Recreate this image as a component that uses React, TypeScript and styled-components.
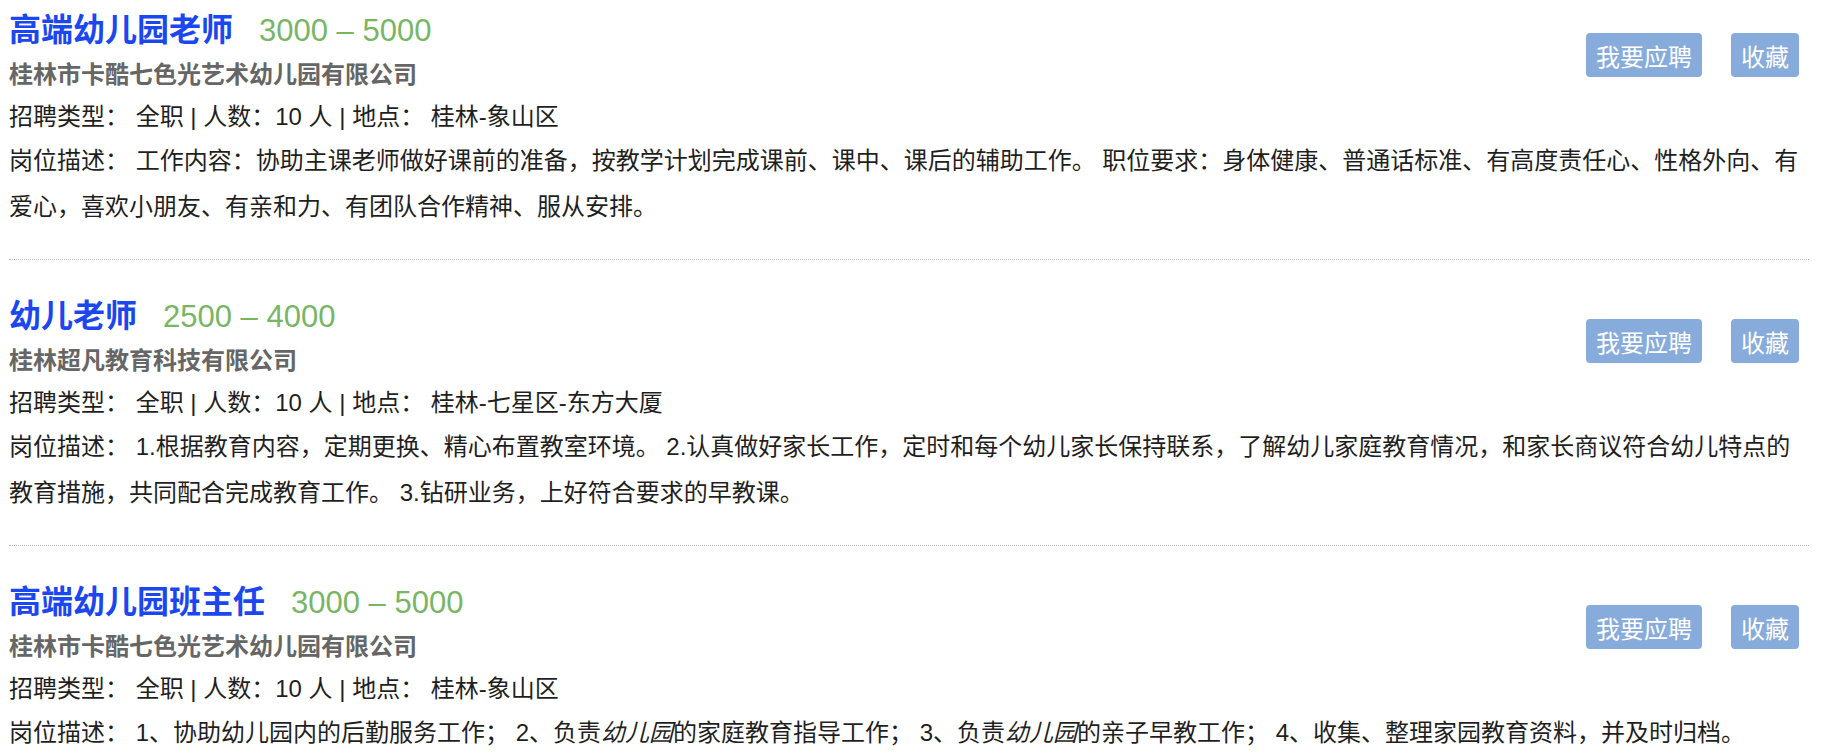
import styled, { createGlobalStyle } from "styled-components";

const GlobalStyle = createGlobalStyle`
    body {
        margin: 0;
        background: #fff;
        font-family: "Liberation Sans", "Noto Sans CJK SC", sans-serif;
        color: #1f1f1f;
    }
`;

const JobList = styled.ul`
    list-style: none;
    margin: 0;
    padding: 0 12px 0 9px;
`;

const JobItem = styled.li`
    padding-bottom: 29px;
    border-bottom: 1px dotted #b8b8b8;
    & + & {
        padding-top: 26px;
    }
`;

const Header = styled.div`
    display: flex;
    justify-content: space-between;
    align-items: flex-start;
    padding-right: 10px;
`;

const TitleLine = styled.div`
    height: 54px;
    line-height: 60px;
    white-space: nowrap;
`;

const Title = styled.a`
    font-size: 32px;
    font-weight: 600;
    color: #1a47f0;
    text-decoration: none;
`;

const Salary = styled.span`
    font-size: 31px;
    color: #78b665;
    margin-left: 26px;
`;

const Company = styled.div`
    font-size: 24px;
    line-height: 42px;
    font-weight: bold;
    color: #666;
`;

const Actions = styled.div`
    display: flex;
    gap: 29px;
    margin-top: 33px;
`;

const Button = styled.button`
    height: 44px;
    padding: 0 10px;
    border: none;
    border-radius: 4px;
    background: #87acdc;
    color: #fff;
    font-family: inherit;
    font-size: 24px;
    cursor: pointer;
`;

const Info = styled.div`
    font-size: 24px;
    line-height: 42px;
`;

const Desc = styled.p`
    margin: 0;
    font-size: 24px;
    line-height: 46px;
    em {
        font-style: italic;
    }
`;

interface IJob {
    id: number;
    title: string;
    salary: string;
    company: string;
    location: string;
    desc: React.ReactNode;
}

const jobs: IJob[] = [
    {
        id: 1,
        title: "高端幼儿园老师",
        salary: "3000 – 5000",
        company: "桂林市卡酷七色光艺术幼儿园有限公司",
        location: "桂林-象山区",
        desc: "工作内容：协助主课老师做好课前的准备，按教学计划完成课前、课中、课后的辅助工作。 职位要求：身体健康、普通话标准、有高度责任心、性格外向、有爱心，喜欢小朋友、有亲和力、有团队合作精神、服从安排。",
    },
    {
        id: 2,
        title: "幼儿老师",
        salary: "2500 – 4000",
        company: "桂林超凡教育科技有限公司",
        location: "桂林-七星区-东方大厦",
        desc: "1.根据教育内容，定期更换、精心布置教室环境。 2.认真做好家长工作，定时和每个幼儿家长保持联系，了解幼儿家庭教育情况，和家长商议符合幼儿特点的教育措施，共同配合完成教育工作。 3.钻研业务，上好符合要求的早教课。",
    },
    {
        id: 3,
        title: "高端幼儿园班主任",
        salary: "3000 – 5000",
        company: "桂林市卡酷七色光艺术幼儿园有限公司",
        location: "桂林-象山区",
        desc: (
            <>
                1、协助幼儿园内的后勤服务工作； 2、负责<em>幼儿园</em>的家庭教育指导工作； 3、负责<em>幼儿园</em>的亲子早教工作； 4、收集、整理家园教育资料，并及时归档。
            </>
        ),
    },
];

function App() {
    return (
        <>
            <GlobalStyle />
            <JobList>
                {jobs.map((job) => (
                    <JobItem key={job.id}>
                        <Header>
                            <div>
                                <TitleLine>
                                    <Title href="#">{job.title}</Title>
                                    <Salary>{job.salary}</Salary>
                                </TitleLine>
                                <Company>{job.company}</Company>
                            </div>
                            <Actions>
                                <Button>我要应聘</Button>
                                <Button>收藏</Button>
                            </Actions>
                        </Header>
                        <Info>招聘类型： 全职 | 人数：10 人 | 地点： {job.location}</Info>
                        <Desc>岗位描述： {job.desc}</Desc>
                    </JobItem>
                ))}
            </JobList>
        </>
    );
}

export default App;
